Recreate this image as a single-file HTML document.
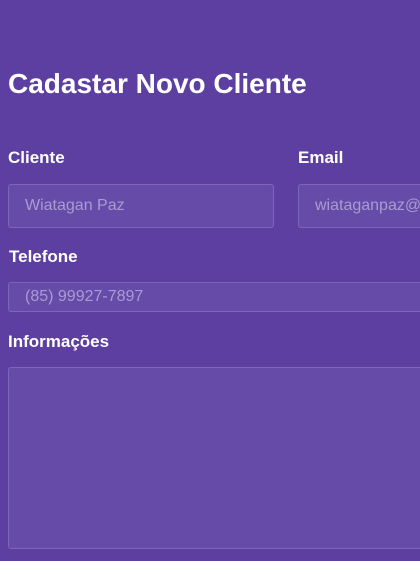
<!DOCTYPE html>
<html><head><style>
html,body{margin:0;padding:0;width:420px;height:561px;overflow:hidden;background:#5c3fa1;font-family:"Liberation Sans",sans-serif;color:#fff}
#w{position:relative;width:420px;height:561px;overflow:hidden}
h1{position:absolute;left:8px;top:68px;margin:0;font-size:28px;font-weight:bold;line-height:32px;white-space:nowrap}
.l{position:absolute;font-size:17px;font-weight:bold;line-height:18px}
.i{position:absolute;box-sizing:border-box;background:#664ba8;border:1px solid #7d65ba;border-radius:3px;color:#ab9bd2;font-size:16px;padding-left:16px;white-space:nowrap;overflow:hidden}
</style></head><body><div id="w">
<h1>Cadastar Novo Cliente</h1>
<div class="l" style="left:8px;top:149px">Cliente</div>
<div class="l" style="left:298px;top:149px">Email</div>
<div class="i" style="left:8px;top:184px;width:266px;height:44px;line-height:42px">Wiatagan Paz</div>
<div class="i" style="left:298px;top:184px;width:130px;height:44px;line-height:42px;border-right:none">wiataganpaz@gmail.com</div>
<div class="l" style="left:9px;top:248px">Telefone</div>
<div class="i" style="left:8px;top:282px;width:420px;height:30px;line-height:28px;border-right:none">(85) 99927-7897</div>
<div class="l" style="left:8px;top:333px">Informações</div>
<div class="i" style="left:8px;top:367px;width:420px;height:182px;border-right:none"></div>
</div></body></html>
